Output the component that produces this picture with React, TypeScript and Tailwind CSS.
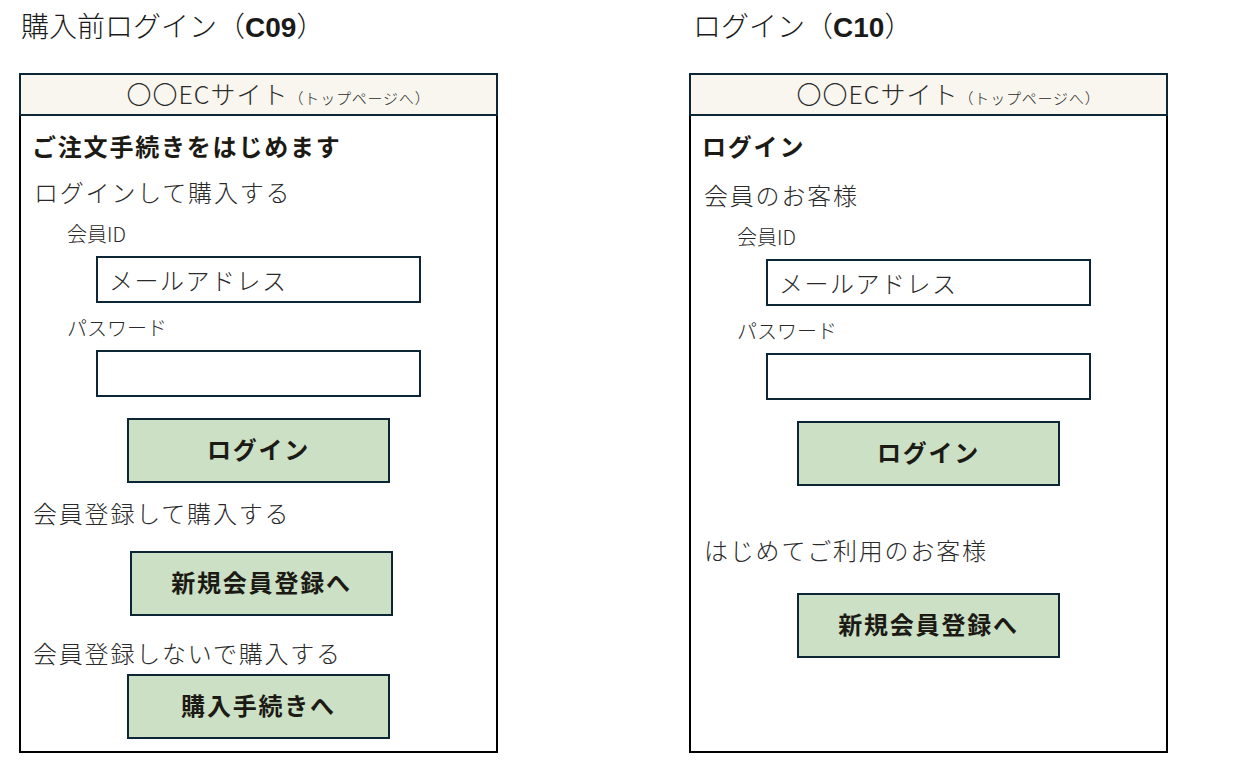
import React from "react";

const jp = { fontFamily: '"Noto Sans CJK JP", "Noto Sans", sans-serif' };

function Header() {
  return (
    <div className="h-[43px] border-2 border-[#0c2635] bg-[#f8f6ef] flex items-baseline justify-center pl-[40px] leading-[36px] text-[#2a2a2a]">
      <span className="text-[25px] font-light tracking-[1px]">〇〇ECサイト</span>
      <span className="text-[15px] font-light tracking-[0.8px]">（トップページへ）</span>
    </div>
  );
}

function Input({ text, mt }: { text?: string; mt: string }) {
  return (
    <div className={`ml-[75px] w-[325px] h-[47px] border-2 border-[#0c2635] flex items-center pl-[11px] text-[24px] font-light tracking-[1.5px] text-[#2a2a2a] ${mt}`}>
      {text}
    </div>
  );
}

function Btn({ text, ml, mt }: { text: string; ml: string; mt: string }) {
  return (
    <div className={`${ml} ${mt} w-[263px] h-[65px] border-2 border-[#0c2635] bg-[#cce0c6] flex items-center justify-center pb-[3px] text-[24px] font-bold tracking-[1.8px] text-[#1c1a14]`}>
      {text}
    </div>
  );
}

function Label({ text, mt }: { text: string; mt: string }) {
  return <div className={`ml-[46px] h-[26px] leading-[26px] text-[20px] font-light text-[#2a2a2a] ${mt}`}>{text}</div>;
}

function Line({ text, mt, ml }: { text: string; mt: string; ml: string }) {
  return <div className={`${ml} ${mt} h-[32px] leading-[32px] text-[24px] font-light tracking-[1.8px] text-[#2a2a2a]`}>{text}</div>;
}

export default function App() {
  return (
    <div className="w-[1242px] h-[765px] bg-white flex items-start gap-[191px] pl-[19px]" style={jp}>
      {/* Left */}
      <div className="w-[479px] flex flex-col">
        <div className="h-[73px] pl-[2px] pt-[5px] leading-[40px] text-[28px] font-light text-[#1a1a1a]">
          購入前ログイン（<span className="font-bold" style={{ fontFamily: '"Liberation Sans", Arial, sans-serif' }}>C09</span>）
        </div>
        <Header />
        <div className="h-[637px] border-2 border-t-0 border-black flex flex-col">
          <div className="ml-[11px] mt-[14px] h-[32px] leading-[32px] text-[24px] font-bold tracking-[1.8px] text-[#1c1a14]">ご注文手続きをはじめます</div>
          <Line text="ログインして購入する" ml="ml-[13px]" mt="mt-[14px]" />
          <Label text="会員ID" mt="mt-[13px]" />
          <Input text="メールアドレス" mt="mt-[9px]" />
          <Label text="パスワード" mt="mt-[12px]" />
          <Input mt="mt-[9px]" />
          <Btn text="ログイン" ml="ml-[106px]" mt="mt-[21px]" />
          <Line text="会員登録して購入する" ml="ml-[12px]" mt="mt-[14px]" />
          <Btn text="新規会員登録へ" ml="ml-[109px]" mt="mt-[22px]" />
          <Line text="会員登録しないで購入する" ml="ml-[12px]" mt="mt-[21px]" />
          <Btn text="購入手続きへ" ml="ml-[106px]" mt="mt-[5px]" />
        </div>
      </div>
      {/* Right */}
      <div className="w-[479px] flex flex-col">
        <div className="h-[73px] pl-[4px] pt-[5px] leading-[40px] text-[28px] font-light text-[#1a1a1a]">
          ログイン（<span className="font-bold" style={{ fontFamily: '"Liberation Sans", Arial, sans-serif' }}>C10</span>）
        </div>
        <Header />
        <div className="h-[637px] border-2 border-t-0 border-black flex flex-col">
          <div className="ml-[11px] mt-[14px] h-[32px] leading-[32px] text-[24px] font-bold tracking-[1.8px] text-[#1c1a14]">ログイン</div>
          <Line text="会員のお客様" ml="ml-[13px]" mt="mt-[17px]" />
          <Label text="会員ID" mt="mt-[13px]" />
          <Input text="メールアドレス" mt="mt-[9px]" />
          <Label text="パスワード" mt="mt-[12px]" />
          <Input mt="mt-[9px]" />
          <Btn text="ログイン" ml="ml-[106px]" mt="mt-[21px]" />
          <Line text="はじめてご利用のお客様" ml="ml-[13px]" mt="mt-[48px]" />
          <Btn text="新規会員登録へ" ml="ml-[106px]" mt="mt-[27px]" />
        </div>
      </div>
    </div>
  );
}
